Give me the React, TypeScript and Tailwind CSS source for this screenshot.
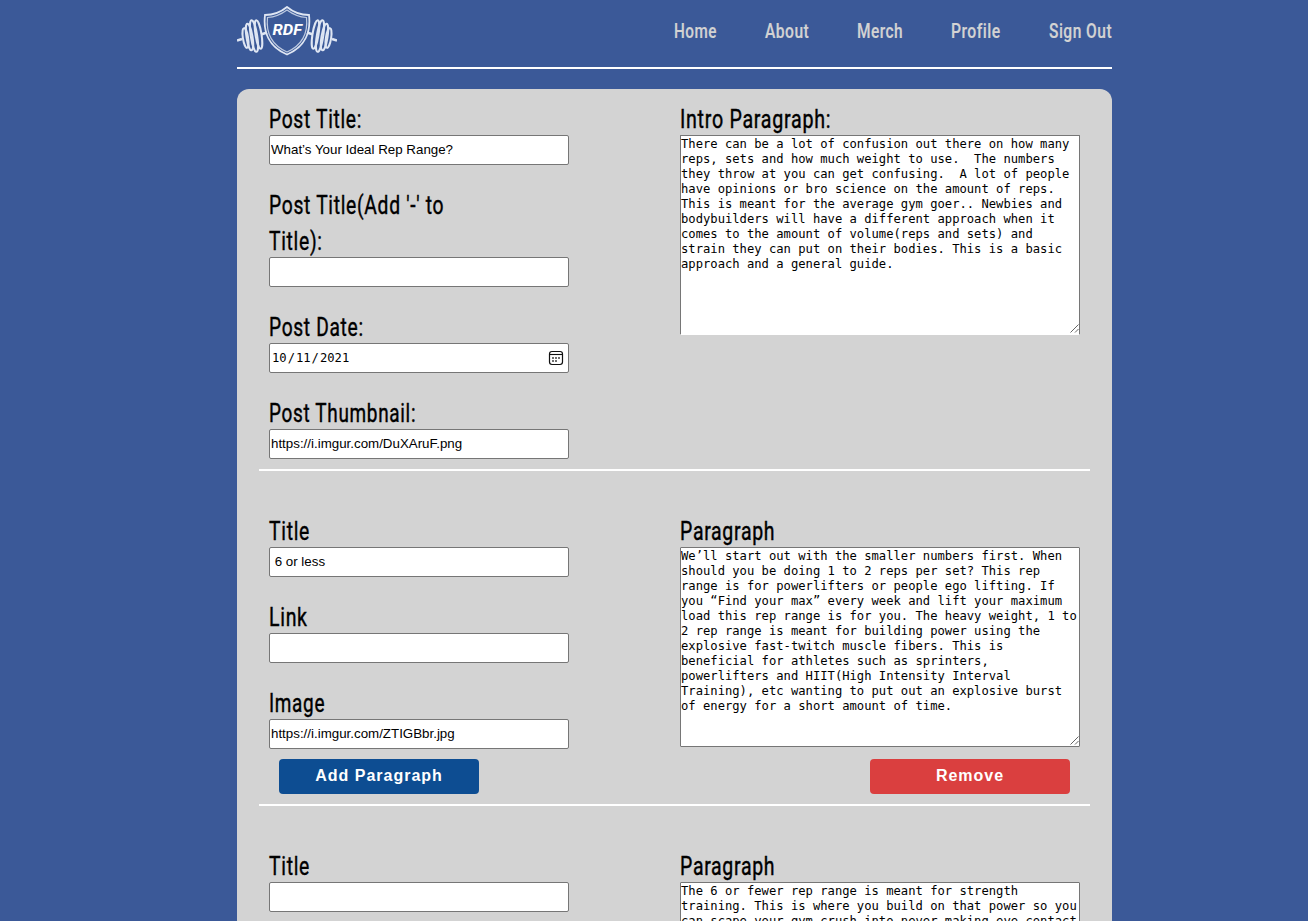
import { useLayoutEffect, useRef } from "react";

function Fit({ text, width, className = "" }: { text: string; width: number; className?: string }) {
  const ref = useRef<HTMLSpanElement>(null);
  useLayoutEffect(() => {
    const el = ref.current;
    if (el) el.style.transform = `scaleX(${width / el.offsetWidth})`;
  }, [text, width]);
  return (
    <span className={`block ${className}`} style={{ width }}>
      <span ref={ref} className="inline-block origin-left whitespace-nowrap align-top">{text}</span>
    </span>
  );
}

function Label({ lines }: { lines: [string, number][] }) {
  return (
    <div className="font-[Roboto,sans-serif] text-[25px] font-normal tracking-[0.9px] text-black [-webkit-text-stroke:0.4px_black]">
      {lines.map(([text, width]) => (
        <Fit key={text} text={text} width={width} className="h-[36px] leading-[41px]" />
      ))}
    </div>
  );
}

const box =
  "h-[30px] w-[300px] rounded-[2px] border border-[#767676] bg-white px-px text-[13.333px] leading-[26px] text-black outline-none font-['Liberation_Sans',Arial,sans-serif]";

function Field({ lines, value = "", className = "" }: { lines: [string, number][]; value?: string; className?: string }) {
  return (
    <div>
      <Label lines={lines} />
      <input className={`block pb-[2px] ${box} ${className}`} defaultValue={value} />
    </div>
  );
}

function CalendarIcon() {
  return (
    <svg width="16" height="16" viewBox="0 0 16 16" className="mr-[3px]" fill="none" stroke="#111">
      <rect x="1.5" y="1.5" width="13" height="13" rx="2.4" strokeWidth="1.2" />
      <path d="M1.6 4.5H14.6" strokeWidth="1.1" />
      <path d="M7.2 8H8.8M10.2 8H11.8M4.2 8H5.8M4.2 11H5.8M7.2 11H8.8" strokeWidth="1.600" />
    </svg>
  );
}

function Area({ label, width, text, className = "" }: { label: string; width: number; text: string; className?: string }) {
  return (
    <div className="w-[400px]">
      <Label lines={[[label, width]]} />
      <div className="relative">
        <textarea
          wrap="off"
          defaultValue={text}
          className={`block h-[200px] w-[400px] resize-none overflow-hidden rounded-[1px] border border-[#767676] bg-white py-[1px] pr-px pl-0 font-['DejaVu_Sans_Mono',monospace] text-[12.18px] leading-[15px] text-black outline-none ${className}`}
        />
        <svg width="9" height="9" className="absolute right-[1px] bottom-[2px]" stroke="#666" strokeWidth="1">
          <path d="M0.5 8.5L8.5 0.5M5 8.5L8.5 5" />
        </svg>
      </div>
    </div>
  );
}

function Barbell() {
  return (
    <>
      <g strokeWidth="2">
        <ellipse cx="8.5" cy="32" rx="2.6" ry="10" transform="rotate(-9 8.5 32)" />
        <ellipse cx="12.5" cy="31" rx="3" ry="13.500" transform="rotate(-9 12.5 31)" />
        <ellipse cx="17" cy="30" rx="3.200" ry="16" transform="rotate(-9 17 30)" />
        <ellipse cx="21.500" cy="28.500" rx="3" ry="14.500" transform="rotate(-9 21.500 28.500)" />
      </g>
      <path d="M0 34.500L5 33M24 28.500L30 26.500" strokeWidth="2.600" />
    </>
  );
}

function Logo() {
  return (
    <svg width="100" height="50" viewBox="0 0 100 50" className="mt-[6px]" fill="none" stroke="#dfe6f3">
      <path d="M50 1C44 6 36 9 28 9C26 26 32 41 50 48.500C68 41 74 26 72 9C64 9 56 6 50 1Z" strokeWidth="1.800" />
      <path d="M50 4C44 8.500 38 11 30.500 11.500C29 26 34.500 39 50 46C65.500 39 71 26 69.500 11.500C62 11 56 8.500 50 4Z" strokeWidth="1.200" strokeOpacity="0.8" />
      <Barbell />
      <g transform="translate(100 0) scale(-1 1)">
        <Barbell />
      </g>
      <text x="35.500" y="29" fill="#fff" stroke="none" fontSize="15.500" fontWeight="700" fontStyle="italic" fontFamily="Roboto, sans-serif" textLength="29.500" lengthAdjust="spacingAndGlyphs">RDF</text>
    </svg>
  );
}

const nav: [string, number, string][] = [
  ["Home", 43, "mr-[48px]"],
  ["About", 44, "mr-[48px]"],
  ["Merch", 46, "mr-[48px]"],
  ["Profile", 50, "mr-[48px]"],
  ["Sign Out", 63, ""],
];

const intro = `There can be a lot of confusion out there on how many
reps, sets and how much weight to use.  The numbers
they throw at you can get confusing.  A lot of people
have opinions or bro science on the amount of reps.
This is meant for the average gym goer.. Newbies and
bodybuilders will have a different approach when it
comes to the amount of volume(reps and sets) and
strain they can put on their bodies. This is a basic
approach and a general guide.`;

const first = `We’ll start out with the smaller numbers first. When
should you be doing 1 to 2 reps per set? This rep
range is for powerlifters or people ego lifting. If
you “Find your max” every week and lift your maximum
load this rep range is for you. The heavy weight, 1 to
2 rep range is meant for building power using the
explosive fast-twitch muscle fibers. This is
beneficial for athletes such as sprinters,
powerlifters and HIIT(High Intensity Interval
Training), etc wanting to put out an explosive burst
of energy for a short amount of time.`;

const second = `The 6 or fewer rep range is meant for strength
training. This is where you build on that power so you
can scape your gym crush into never making eye contact`;

const button =
  "h-[35px] w-[200px] rounded-[4px] pb-[2px] text-[16px] font-bold tracking-[1px] text-white font-['Liberation_Sans',Arial,sans-serif]";

export default function App() {
  return (
    <div className="h-[921px] overflow-hidden bg-[#3b5998]">
      <div className="ml-[237px] w-[875px]">
        <header className="flex h-[69px] items-start justify-between border-b-2 border-white">
          <Logo />
          <nav className="flex pt-[20px] font-[Roboto,sans-serif] text-[19.5px] leading-[24px] font-medium tracking-[0.6px] text-[#d3d3d3] [-webkit-text-stroke:0.2px_#d3d3d3]">
            {nav.map(([text, width, gap]) => (
              <Fit key={text} text={text} width={width} className={gap} />
            ))}
          </nav>
        </header>
        <main className="mt-5 h-[900px] rounded-t-[12px] bg-[#d3d3d3] px-[22px] pt-[10px]">
          <section className="flex justify-between border-b-2 border-white px-[10px] pb-[10px]">
            <div className="flex flex-col gap-5">
              <Field lines={[["Post Title:", 93]]} value="What’s Your Ideal Rep Range?" className="border-[#4f4f4f]" />
              <Field lines={[["Post Title(Add '-' to", 175], ["Title):", 54]]} />
              <div>
                <Label lines={[["Post Date:", 95]]} />
                <div className={`flex items-center justify-between ${box}`}>
                  <span className="pl-px font-['DejaVu_Sans_Mono',monospace] text-[12.17px] whitespace-pre">
                    10<span className="px-[1px]">/</span>11<span className="px-[1px]">/</span>2021
                  </span>
                  <CalendarIcon />
                </div>
              </div>
              <Field lines={[["Post Thumbnail:", 147]]} value="https://i.imgur.com/DuXAruF.png" />
            </div>
            <Area label="Intro Paragraph:" width={151} text={intro} className="border-b-white" />
          </section>
          <section className="border-b-2 border-white px-[10px] pt-10 pb-[10px]">
            <div className="flex justify-between">
              <div className="flex flex-col gap-5">
                <Field lines={[["Title", 41]]} value=" 6 or less" />
                <Field lines={[["Link", 39]]} />
                <Field lines={[["Image", 56]]} value="https://i.imgur.com/ZTIGBbr.jpg" />
              </div>
              <Area label="Paragraph" width={95} text={first} />
            </div>
            <div className="mt-[10px] flex justify-between px-[10px]">
              <button className={`${button} bg-[#0d4d92]`}>Add Paragraph</button>
              <button className={`${button} bg-[#da3f3f]`}>Remove</button>
            </div>
          </section>
          <section className="flex justify-between px-[10px] pt-10">
            <Field lines={[["Title", 41]]} />
            <Area label="Paragraph" width={95} text={second} />
          </section>
        </main>
      </div>
    </div>
  );
}
